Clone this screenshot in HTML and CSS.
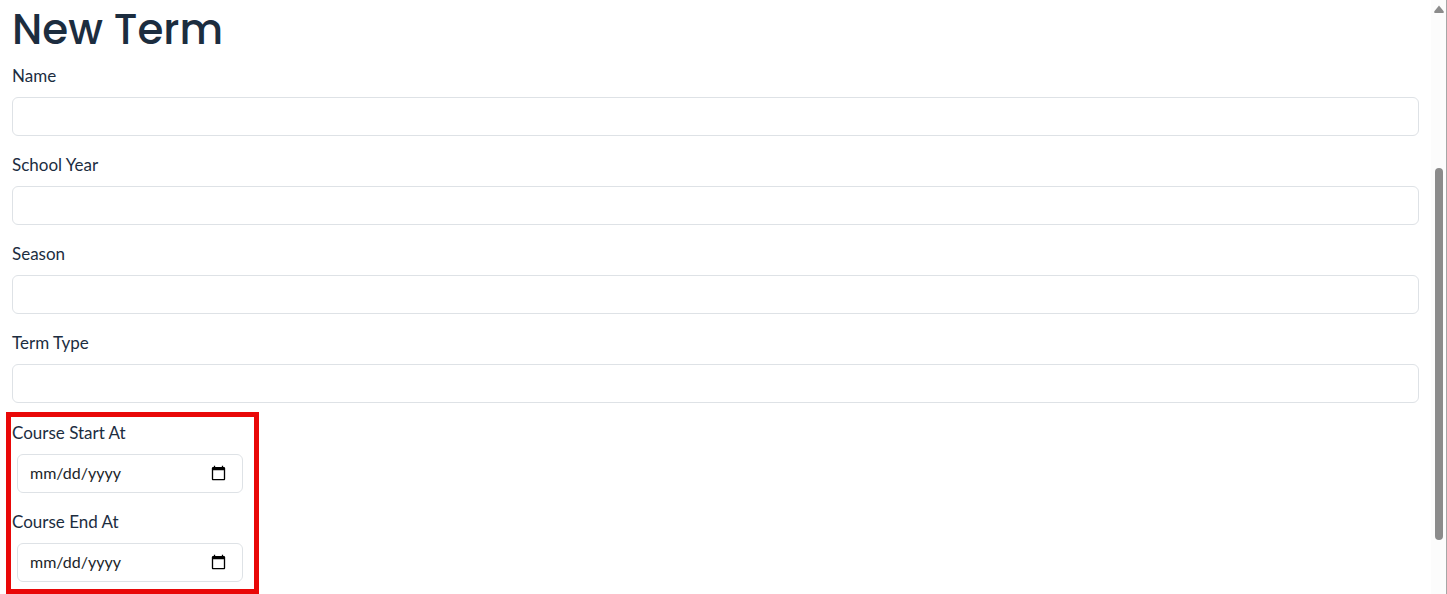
FILE: index.html
```html
<!DOCTYPE html>
<html lang="en">
<head>
<meta charset="utf-8">
<meta name="viewport" content="width=device-width, initial-scale=1">
<title>New Term</title>
<link rel="stylesheet" href="styles.css">
</head>
<body>
<div class="page">
  <main class="content">
    <h1 class="title">New Term</h1>
    <form class="form">
      <div class="field">
        <label class="label" for="name">Name</label>
        <input class="input" id="name" type="text">
      </div>
      <div class="field">
        <label class="label" for="year">School Year</label>
        <input class="input" id="year" type="text">
      </div>
      <div class="field">
        <label class="label" for="season">Season</label>
        <input class="input" id="season" type="text">
      </div>
      <div class="field">
        <label class="label" for="type">Term Type</label>
        <input class="input" id="type" type="text">
      </div>
      <div class="dates">
        <div class="field">
          <label class="label" for="start">Course Start At</label>
          <input class="input input-date" id="start" type="date">
        </div>
        <div class="field">
          <label class="label" for="end">Course End At</label>
          <input class="input input-date" id="end" type="date">
        </div>
      </div>
    </form>
  </main>
  <div class="scrollbar" aria-hidden="true">
    <svg class="arrow" width="10" height="8" viewBox="0 0 10 8"><path d="M5 0.5 9.6 6.2Q10.2 8 9 8H1Q-0.2 8 0.4 6.2Z" fill="#8b8b8b"/></svg>
    <div class="thumb"></div>
  </div>
</div>
</body>
</html>
```
FILE: styles.css
```css
* {
  box-sizing: border-box;
}

body {
  margin: 0;
  background: #fff;
  color: #1c2d3f;
  font: 17px/24px Lato, sans-serif;
}

.page {
  display: flex;
  min-height: 100vh;
}

.content {
  flex: 1;
  padding: 4px 12px 0;
}

.title {
  margin: 0 0 8px;
  font: 500 42px/52px Poppins, Inter, sans-serif;
}

.form {
  display: grid;
  gap: 17px;
}

.field {
  display: flex;
  flex-direction: column;
  gap: 9px;
}

.label {
  align-self: flex-start;
  line-height: 24px;
}

.input {
  width: 100%;
  height: 39px;
  padding: 6px 12px;
  border: 1px solid #dee2e6;
  border-radius: 6px;
  background: #fff;
  color: #212529;
  font: inherit;
}

.dates {
  position: relative;
  display: grid;
  gap: 17px;
  justify-self: start;
  margin-top: 1px;
}

.dates::after {
  content: "";
  position: absolute;
  inset: -9px -16px -12px -6px;
  border: 5px solid #e90808;
  pointer-events: none;
}

.input-date {
  width: 226px;
  margin-left: 5px;
  padding: 5px 12px 7px;
  font-size: 16px;
}

.input-date::-webkit-datetime-edit,
.input-date::-webkit-datetime-edit-fields-wrapper,
.input-date::-webkit-datetime-edit-month-field,
.input-date::-webkit-datetime-edit-day-field,
.input-date::-webkit-datetime-edit-year-field {
  padding: 0;
}

.input-date::-webkit-calendar-picker-indicator {
  width: 17px;
  height: 17px;
  margin-top: 2px;
  margin-right: 2px;
  padding: 1px;
}

.scrollbar {
  display: flex;
  flex-direction: column;
  align-items: center;
  width: 16px;
  padding: 5px 0 54px;
  border-right: 1px solid #a6a6a6;
  background: #fcfcfc;
}

.thumb {
  flex: 1;
  width: 8px;
  margin-top: 155px;
  border-radius: 4px;
  background: #8b8b8b;
}
```
